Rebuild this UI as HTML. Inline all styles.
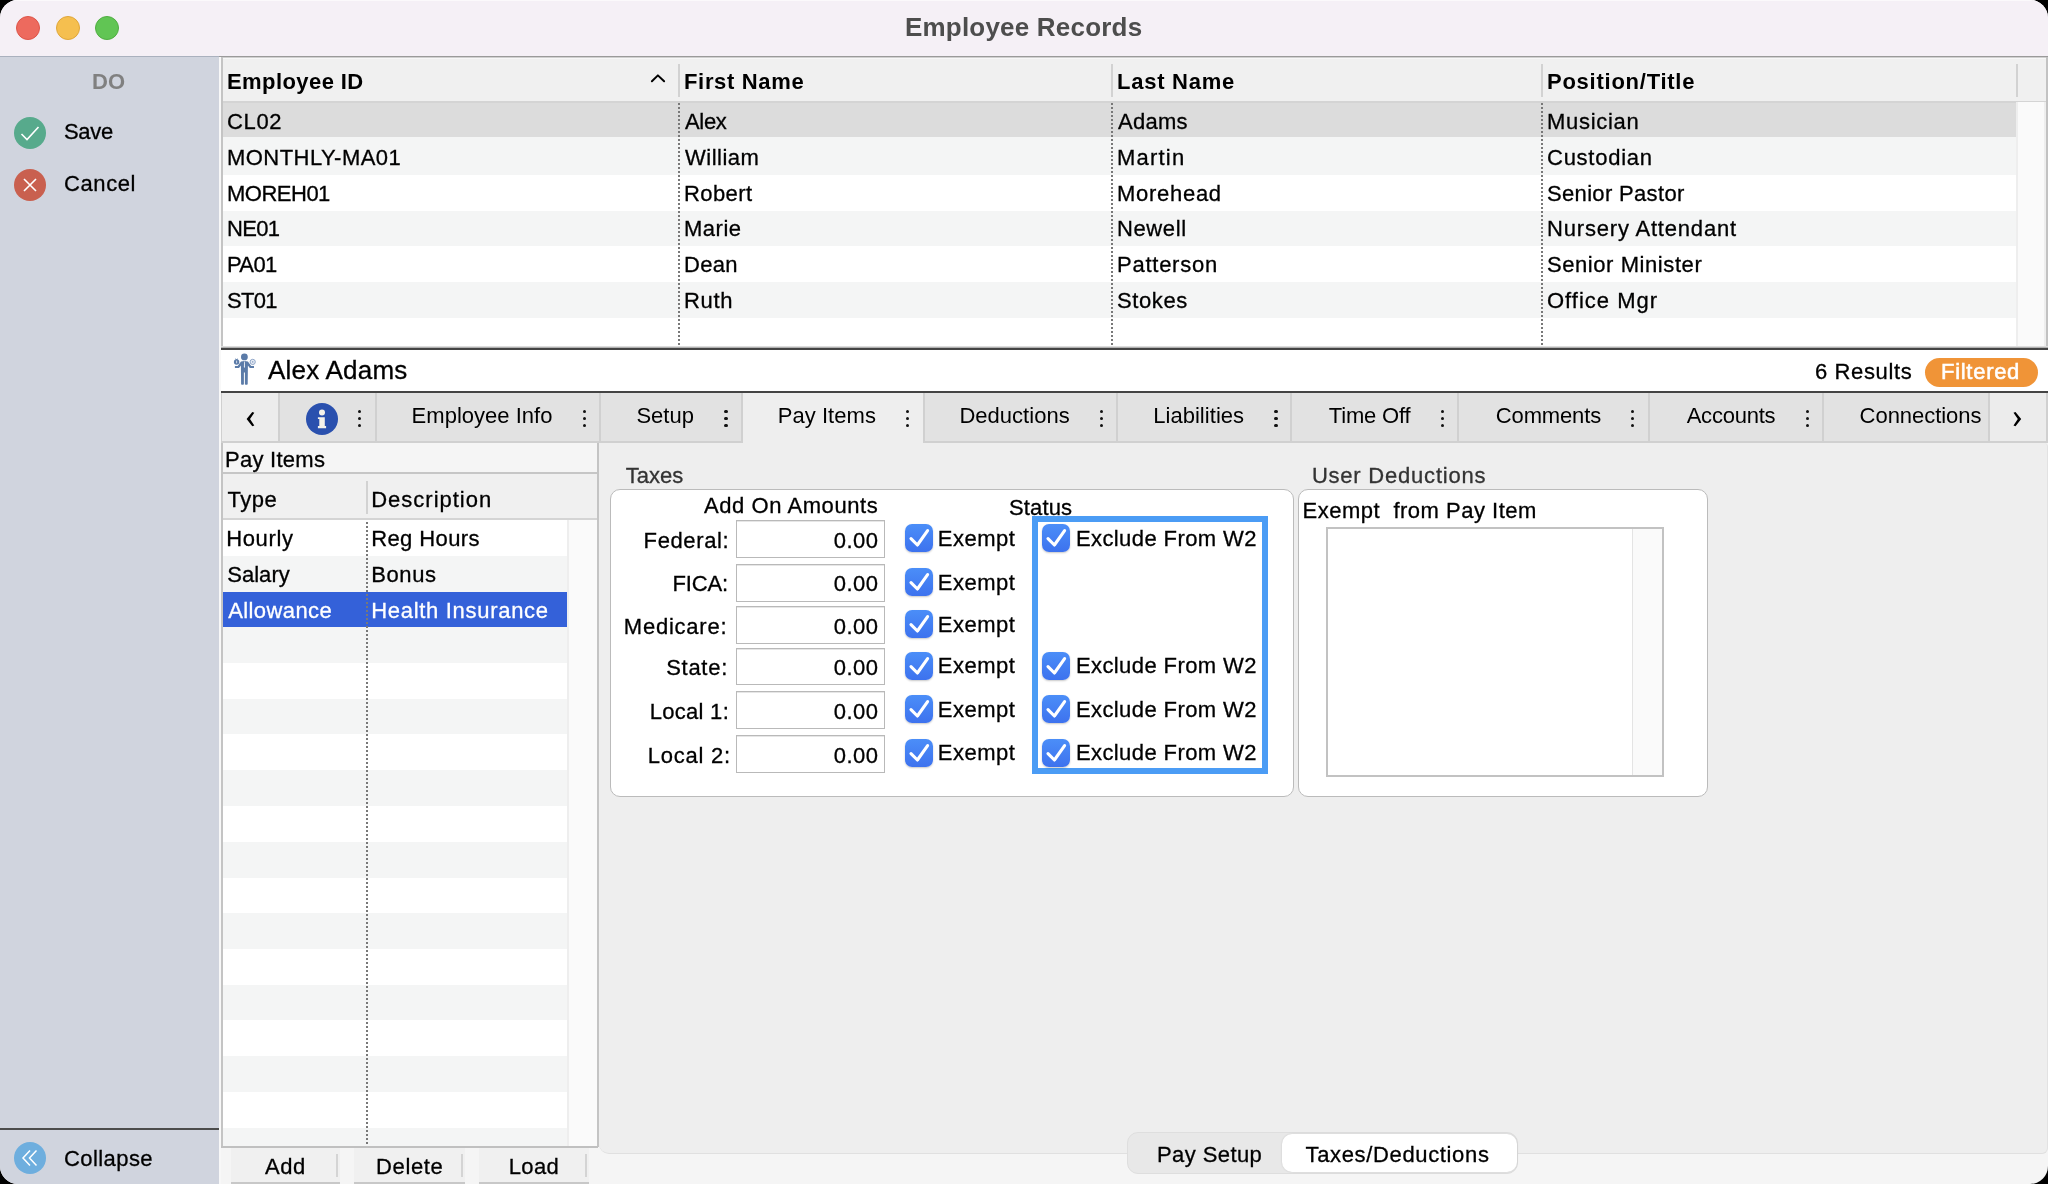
<!DOCTYPE html>
<html>
<head>
<meta charset="utf-8">
<title>Employee Records</title>
<style>
*{box-sizing:border-box;margin:0;padding:0}
html,body{width:2048px;height:1184px;overflow:hidden;background:#000}
body{font-family:"Liberation Sans",sans-serif;font-size:22px;color:#000;position:relative}
.a{position:absolute}
.t{position:absolute;white-space:nowrap;line-height:1;-webkit-text-stroke:0.3px currentColor}
.b{font-weight:bold;-webkit-text-stroke:0}
#win{position:absolute;left:0;top:0;width:2048px;height:1184px;border-radius:18px;overflow:hidden;background:#f5f5f5;will-change:transform}
.tl{position:absolute;top:16px;width:24px;height:24px;border-radius:50%}
.vd{position:absolute;width:2px;background-image:linear-gradient(#787878 50%,rgba(0,0,0,0) 50%);background-size:2px 4px}
.dots{position:absolute;width:4px;height:20px}
.dots i{position:absolute;left:0;width:3.4px;height:3.4px;border-radius:50%;background:#111}
.cb{position:absolute;width:28px;height:28px;border-radius:7px;background:linear-gradient(#4b8ef8,#3d72ee);box-shadow:0 1px 2px rgba(0,0,0,.22)}
.cb svg{position:absolute;left:0;top:0}
.inp{position:absolute;width:149px;background:#fff;border:1px solid #b9b9b9;box-shadow:inset 0 1px 0 #e6e6e6}
</style>
</head>
<body>
<div id="win">
<div class="a" style="left:0px;top:0px;width:2048px;height:56px;background:#f5f0f6"></div>
<div class="a" style="left:0px;top:0px;width:2048px;height:1px;background:#fbf9fb"></div>
<div class="a" style="left:0px;top:56px;width:219px;height:1px;background:#aab1be"></div>
<div class="a" style="left:219px;top:56px;width:1829px;height:1px;background:#9a9a9a"></div>
<div class="tl" style="left:16px;background:#ed6a5e;border:1px solid #dd5549"></div>
<div class="tl" style="left:56px;background:#f5bf4f;border:1px solid #dfa63a"></div>
<div class="tl" style="left:95px;background:#61c554;border:1px solid #50ad42"></div>
<div id="t0" class="t b" style="left:905.00px;top:14px;font-size:26px;letter-spacing:0.200px;color:#4d4d4d">Employee Records</div>
<div class="a" style="left:0px;top:57px;width:219px;height:1127px;background:#d0d4de"></div>
<div class="a" style="left:219px;top:57px;width:2px;height:1127px;background:#f8f8f8"></div>
<div id="t1" class="t b" style="left:92.00px;top:71px;font-size:22px;color:#808080">DO</div>
<div class="a" style="left:14px;top:117px;width:32px;height:32px;border-radius:50%;background:#57aa8c"><svg width="32" height="32" viewBox="0 0 32 32"><path d="M7.5 17 L13 22.5 L24.5 10" fill="none" stroke="#fff" stroke-width="1.6"/></svg></div>
<div id="t2" class="t " style="left:64.00px;top:121px;font-size:22px;letter-spacing:-0.333px;">Save</div>
<div class="a" style="left:14px;top:169px;width:32px;height:32px;border-radius:50%;background:#c9604f"><svg width="32" height="32" viewBox="0 0 32 32"><path d="M10 10 L22 22 M22 10 L10 22" fill="none" stroke="#fff" stroke-width="1.6"/></svg></div>
<div id="t3" class="t " style="left:64.00px;top:173px;font-size:22px;letter-spacing:0.600px;">Cancel</div>
<div class="a" style="left:0px;top:1128px;width:219px;height:2px;background:#4c4c4c"></div>
<div class="a" style="left:14px;top:1142px;width:32px;height:32px;border-radius:50%;background:#6eaede"><svg width="32" height="32" viewBox="0 0 32 32"><path d="M16 8.5 L9 16 L16 23.5 M22.5 8.5 L15.5 16 L22.5 23.5" fill="none" stroke="#fff" stroke-width="1.5"/></svg></div>
<div id="t4" class="t " style="left:64.00px;top:1148px;font-size:22px;letter-spacing:0.429px;">Collapse</div>
<div class="a" style="left:223px;top:57px;width:1825px;height:291px;background:#fff"></div>
<div class="a" style="left:221px;top:57px;width:2px;height:291px;background:#c4c4c4"></div>
<div class="a" style="left:223px;top:57px;width:1825px;height:44px;background:#f0f0f0"></div>
<div class="a" style="left:223px;top:57px;width:1823px;height:1px;background:#d0d0d0"></div>
<div class="a" style="left:223px;top:58px;width:1823px;height:1px;background:#f7f7f7"></div>
<div class="a" style="left:223px;top:101px;width:1825px;height:2px;background:#d4d4d4"></div>
<div class="a" style="left:223px;top:103px;width:1794px;height:34px;background:#dcdcdc"></div>
<div id="t5" class="t " style="left:227.00px;top:111px;font-size:22px;letter-spacing:0.667px;">CL02</div>
<div id="t6" class="t " style="left:685.00px;top:111px;font-size:22px;letter-spacing:-0.333px;">Alex</div>
<div id="t7" class="t " style="left:1118.00px;top:111px;font-size:22px;letter-spacing:0.250px;">Adams</div>
<div id="t8" class="t " style="left:1547.00px;top:111px;font-size:22px;letter-spacing:0.714px;">Musician</div>
<div class="a" style="left:223px;top:137px;width:1794px;height:38px;background:#f4f5f5"></div>
<div id="t9" class="t " style="left:227.00px;top:147px;font-size:22px;letter-spacing:0.455px;">MONTHLY-MA01</div>
<div id="t10" class="t " style="left:685.00px;top:147px;font-size:22px;letter-spacing:0.500px;">William</div>
<div id="t11" class="t " style="left:1117.00px;top:147px;font-size:22px;letter-spacing:1.200px;">Martin</div>
<div id="t12" class="t " style="left:1547.00px;top:147px;font-size:22px;letter-spacing:0.750px;">Custodian</div>
<div class="a" style="left:223px;top:175px;width:1794px;height:36px;background:#fff"></div>
<div id="t13" class="t " style="left:227.00px;top:183px;font-size:22px;letter-spacing:-0.500px;">MOREH01</div>
<div id="t14" class="t " style="left:684.00px;top:183px;font-size:22px;letter-spacing:0.400px;">Robert</div>
<div id="t15" class="t " style="left:1117.00px;top:183px;font-size:22px;letter-spacing:0.714px;">Morehead</div>
<div id="t16" class="t " style="left:1547.00px;top:183px;font-size:22px;letter-spacing:0.334px;">Senior Pastor</div>
<div class="a" style="left:223px;top:211px;width:1794px;height:35px;background:#f4f5f5"></div>
<div id="t17" class="t " style="left:227.00px;top:218px;font-size:22px;letter-spacing:-0.667px;">NE01</div>
<div id="t18" class="t " style="left:684.00px;top:218px;font-size:22px;letter-spacing:0.500px;">Marie</div>
<div id="t19" class="t " style="left:1117.00px;top:218px;font-size:22px;letter-spacing:0.600px;">Newell</div>
<div id="t20" class="t " style="left:1547.00px;top:218px;font-size:22px;letter-spacing:0.812px;">Nursery Attendant</div>
<div class="a" style="left:223px;top:246px;width:1794px;height:36px;background:#fff"></div>
<div id="t21" class="t " style="left:227.00px;top:254px;font-size:22px;letter-spacing:-0.667px;">PA01</div>
<div id="t22" class="t " style="left:684.00px;top:254px;font-size:22px;letter-spacing:0.333px;">Dean</div>
<div id="t23" class="t " style="left:1117.00px;top:254px;font-size:22px;letter-spacing:0.750px;">Patterson</div>
<div id="t24" class="t " style="left:1547.00px;top:254px;font-size:22px;letter-spacing:0.571px;">Senior Minister</div>
<div class="a" style="left:223px;top:282px;width:1794px;height:36px;background:#f4f5f5"></div>
<div id="t25" class="t " style="left:227.00px;top:290px;font-size:22px;letter-spacing:-0.667px;">ST01</div>
<div id="t26" class="t " style="left:684.00px;top:290px;font-size:22px;letter-spacing:0.667px;">Ruth</div>
<div id="t27" class="t " style="left:1117.00px;top:290px;font-size:22px;letter-spacing:0.600px;">Stokes</div>
<div id="t28" class="t " style="left:1547.00px;top:290px;font-size:22px;letter-spacing:1.000px;">Office Mgr</div>
<div class="a" style="left:2016px;top:102px;width:30px;height:244px;background:#fafafa;border-left:2px solid #eeeeee;border-right:2px solid #eeeeee"></div>
<div class="a" style="left:2046px;top:57px;width:2px;height:289px;background:#c2c2c2"></div>
<div id="t29" class="t b" style="left:227.00px;top:71px;font-size:22px;letter-spacing:0.420px;">Employee ID</div>
<div id="t30" class="t b" style="left:684.00px;top:71px;font-size:22px;letter-spacing:0.667px;">First Name</div>
<div id="t31" class="t b" style="left:1117.00px;top:71px;font-size:22px;letter-spacing:0.750px;">Last Name</div>
<div id="t32" class="t b" style="left:1547.00px;top:71px;font-size:22px;letter-spacing:0.749px;">Position/Title</div>
<div class="a" style="left:678px;top:64px;width:2px;height:33px;background:#d2d2d2"></div>
<div class="a" style="left:1111px;top:64px;width:2px;height:33px;background:#d2d2d2"></div>
<div class="a" style="left:1541px;top:64px;width:2px;height:33px;background:#d2d2d2"></div>
<div class="a" style="left:2016px;top:64px;width:2px;height:33px;background:#d2d2d2"></div>
<div class="vd" style="left:678px;top:103px;height:243px"></div>
<div class="vd" style="left:1111px;top:103px;height:243px"></div>
<div class="vd" style="left:1541px;top:103px;height:243px"></div>
<svg class="a" style="left:648px;top:70px" width="20" height="16" viewBox="0 0 20 16"><path d="M3.9 11.3 L9.9 5.4 L16.1 11.3" fill="none" stroke="#000" stroke-width="2" stroke-linecap="round" stroke-linejoin="round"/></svg>
<div class="a" style="left:221px;top:346px;width:1827px;height:1px;background:#dcdcdc"></div>
<div class="a" style="left:221px;top:347px;width:1827px;height:1px;background:#b2b2b2"></div>
<div class="a" style="left:221px;top:348px;width:1827px;height:2px;background:#444"></div>
<div class="a" style="left:221px;top:350px;width:1827px;height:41px;background:#fff"></div>
<div class="a" style="left:221px;top:391px;width:1827px;height:2px;background:#444"></div>
<div id="t33" class="t " style="left:268.00px;top:357px;font-size:26px;letter-spacing:0.222px;">Alex Adams</div>
<svg class="a" style="left:226px;top:350px" width="40" height="40" viewBox="0 0 40 40"><g fill="#5b7ba8"><circle cx="18.4" cy="6.9" r="3.4"/><path d="M15 11.4 Q18.4 10.6 21.9 11.4 L25.2 15.9 L28 16.1 L28 18 L23.8 18 L21.9 15.6 L21.7 34.2 Q20.3 35.3 18.9 34.2 L18.9 22.6 L17.9 22.6 L17.9 34.2 Q16.5 35.3 15.1 34.2 L14.9 15.6 L13 18 L8.9 18 L8.9 16.1 L11.7 15.9 Z"/><circle cx="10.6" cy="12" r="2.7"/><path d="M9.2 8 L10.6 9.6 L12 8 L11.4 10 L9.8 10 Z"/></g><ellipse cx="10.6" cy="12" rx="0.6" ry="1.4" fill="#c9d4e6"/><path d="M18.05 11.6 L18.85 11.6 L19 17 L18.45 18 L17.9 17 Z" fill="#e9eef5"/><circle cx="26.7" cy="11.9" r="2.6" fill="#e8edf5" stroke="#8fa6c8" stroke-width="1"/><circle cx="26.7" cy="11.9" r="0.8" fill="#8fa6c8"/></svg>
<div id="t34" class="t " style="left:1815.00px;top:361px;font-size:22px;letter-spacing:0.625px;">6 Results</div>
<div class="a" style="left:1925px;top:358px;width:113px;height:29px;background:#f09437;border-radius:14.5px"></div>
<div id="t35" class="t " style="left:1941.00px;top:361px;font-size:22px;letter-spacing:0.714px;color:#fff;-webkit-text-stroke:0.55px #fff">Filtered</div>
<div class="a" style="left:221px;top:393px;width:1827px;height:48px;background:#e2e2e2"></div>
<div class="a" style="left:221px;top:393px;width:58px;height:48px;background:#ececec"></div>
<div class="a" style="left:1989px;top:393px;width:57px;height:48px;background:#ececec"></div>
<div class="a" style="left:2046px;top:393px;width:2px;height:48px;background:#d0d0d0"></div>
<div class="a" style="left:221px;top:441px;width:1827px;height:2px;background:#d0d0d0"></div>
<div class="a" style="left:221px;top:393px;width:1px;height:50px;background:#d0d0d0"></div>
<div class="a" style="left:743px;top:393px;width:180px;height:50px;background:#eeeeee"></div>
<div class="a" style="left:278px;top:393px;width:2px;height:48px;background:#d0d0d0"></div>
<div class="a" style="left:375px;top:393px;width:2px;height:48px;background:#d0d0d0"></div>
<div class="a" style="left:599px;top:393px;width:2px;height:48px;background:#d0d0d0"></div>
<div class="a" style="left:741px;top:393px;width:2px;height:48px;background:#d0d0d0"></div>
<div class="a" style="left:923px;top:393px;width:2px;height:48px;background:#d0d0d0"></div>
<div class="a" style="left:1116px;top:393px;width:2px;height:48px;background:#d0d0d0"></div>
<div class="a" style="left:1290px;top:393px;width:2px;height:48px;background:#d0d0d0"></div>
<div class="a" style="left:1457px;top:393px;width:2px;height:48px;background:#d0d0d0"></div>
<div class="a" style="left:1648px;top:393px;width:2px;height:48px;background:#d0d0d0"></div>
<div class="a" style="left:1822px;top:393px;width:2px;height:48px;background:#d0d0d0"></div>
<div class="a" style="left:1988px;top:393px;width:2px;height:48px;background:#d0d0d0"></div>
<div id="t36" class="t " style="left:411.60px;top:405px;font-size:22px;letter-spacing:0.020px;-webkit-text-stroke:0">Employee Info</div>
<div id="t37" class="t " style="left:636.40px;top:405px;font-size:22px;-webkit-text-stroke:0">Setup</div>
<div id="t38" class="t " style="left:777.80px;top:405px;font-size:22px;letter-spacing:0.036px;-webkit-text-stroke:0">Pay Items</div>
<div id="t39" class="t " style="left:959.40px;top:405px;font-size:22px;letter-spacing:0.025px;-webkit-text-stroke:0">Deductions</div>
<div id="t40" class="t " style="left:1153.20px;top:405px;font-size:22px;letter-spacing:0.040px;-webkit-text-stroke:0">Liabilities</div>
<div id="t41" class="t " style="left:1328.80px;top:405px;font-size:22px;letter-spacing:-0.179px;-webkit-text-stroke:0">Time Off</div>
<div id="t42" class="t " style="left:1495.80px;top:405px;font-size:22px;letter-spacing:-0.141px;-webkit-text-stroke:0">Comments</div>
<div id="t43" class="t " style="left:1686.70px;top:405px;font-size:22px;letter-spacing:-0.239px;-webkit-text-stroke:0">Accounts</div>
<div id="t44" class="t " style="left:1859.60px;top:405px;font-size:22px;letter-spacing:-0.040px;-webkit-text-stroke:0">Connections</div>
<div class="dots" style="left:357.8px;top:409.6px"><i style="top:0"></i><i style="top:7.2px"></i><i style="top:14.4px"></i></div>
<div class="dots" style="left:582.6px;top:409.6px"><i style="top:0"></i><i style="top:7.2px"></i><i style="top:14.4px"></i></div>
<div class="dots" style="left:724.3px;top:409.6px"><i style="top:0"></i><i style="top:7.2px"></i><i style="top:14.4px"></i></div>
<div class="dots" style="left:905.5px;top:409.6px"><i style="top:0"></i><i style="top:7.2px"></i><i style="top:14.4px"></i></div>
<div class="dots" style="left:1099.8px;top:409.6px"><i style="top:0"></i><i style="top:7.2px"></i><i style="top:14.4px"></i></div>
<div class="dots" style="left:1274.3px;top:409.6px"><i style="top:0"></i><i style="top:7.2px"></i><i style="top:14.4px"></i></div>
<div class="dots" style="left:1441.0px;top:409.6px"><i style="top:0"></i><i style="top:7.2px"></i><i style="top:14.4px"></i></div>
<div class="dots" style="left:1630.7px;top:409.6px"><i style="top:0"></i><i style="top:7.2px"></i><i style="top:14.4px"></i></div>
<div class="dots" style="left:1805.7px;top:409.6px"><i style="top:0"></i><i style="top:7.2px"></i><i style="top:14.4px"></i></div>
<svg class="a" style="left:240px;top:405px" width="20" height="28" viewBox="0 0 20 28"><path d="M14.3 7.8 L12.3 7 L6.6 14.1 L12.3 21.3 L14.3 20.5 L10 14.1 Z" fill="#000"/></svg>
<svg class="a" style="left:2007px;top:405px" width="20" height="28" viewBox="0 0 20 28"><path d="M6.5 7.8 L8.5 7 L14.2 14.1 L8.5 21.3 L6.5 20.5 L10.8 14.1 Z" fill="#000"/></svg>
<div class="a" style="left:306px;top:403px;width:32px;height:32px;border-radius:50%;background:#2a50ae"><svg width="32" height="32" viewBox="0 0 32 32"><circle cx="16" cy="9.4" r="3" fill="#f4f1ea"/><path d="M11.9 14.2 H18.8 V23 H20.1 V25.2 H11.9 V23 H13.3 V15.9 H11.9 Z" fill="#f4f1ea"/></svg></div>
<div class="a" style="left:222px;top:443px;width:376px;height:704px;background:#fff"></div>
<div class="a" style="left:222px;top:443px;width:376px;height:30px;background:#f5f5f5"></div>
<div class="a" style="left:222px;top:472px;width:376px;height:2px;background:#c6c6c6"></div>
<div id="t45" class="t " style="left:225.00px;top:449px;font-size:22px;letter-spacing:0.264px;">Pay Items</div>
<div class="a" style="left:222px;top:474px;width:376px;height:45px;background:#f0f0f0"></div>
<div class="a" style="left:222px;top:518px;width:376px;height:2px;background:#d4d4d4"></div>
<div class="a" style="left:366px;top:481px;width:2px;height:33px;background:#d2d2d2"></div>
<div id="t46" class="t " style="left:227.50px;top:489px;font-size:22px;letter-spacing:0.530px;">Type</div>
<div id="t47" class="t " style="left:371.20px;top:489px;font-size:22px;letter-spacing:1.000px;">Description</div>
<div class="a" style="left:223px;top:520px;width:344px;height:36px;background:#fff"></div>
<div id="t48" class="t " style="left:226.20px;top:528px;font-size:22px;letter-spacing:0.640px;">Hourly</div>
<div id="t49" class="t " style="left:371.20px;top:528px;font-size:22px;letter-spacing:0.400px;">Reg Hours</div>
<div class="a" style="left:223px;top:556px;width:344px;height:36px;background:#f4f5f5"></div>
<div id="t50" class="t " style="left:227.20px;top:564px;font-size:22px;letter-spacing:0.040px;">Salary</div>
<div id="t51" class="t " style="left:371.20px;top:564px;font-size:22px;letter-spacing:0.600px;">Bonus</div>
<div class="a" style="left:223px;top:592px;width:344px;height:35px;background:#3461d9"></div>
<div id="t52" class="t " style="left:228.20px;top:600px;font-size:22px;letter-spacing:0.400px;color:#fff">Allowance</div>
<div id="t53" class="t " style="left:371.20px;top:600px;font-size:22px;letter-spacing:0.701px;color:#fff">Health Insurance</div>
<div class="a" style="left:223px;top:627px;width:344px;height:36px;background:#f4f5f5"></div>
<div class="a" style="left:223px;top:663px;width:344px;height:36px;background:#fff"></div>
<div class="a" style="left:223px;top:699px;width:344px;height:35px;background:#f4f5f5"></div>
<div class="a" style="left:223px;top:734px;width:344px;height:36px;background:#fff"></div>
<div class="a" style="left:223px;top:770px;width:344px;height:36px;background:#f4f5f5"></div>
<div class="a" style="left:223px;top:806px;width:344px;height:36px;background:#fff"></div>
<div class="a" style="left:223px;top:842px;width:344px;height:36px;background:#f4f5f5"></div>
<div class="a" style="left:223px;top:878px;width:344px;height:35px;background:#fff"></div>
<div class="a" style="left:223px;top:913px;width:344px;height:36px;background:#f4f5f5"></div>
<div class="a" style="left:223px;top:949px;width:344px;height:36px;background:#fff"></div>
<div class="a" style="left:223px;top:985px;width:344px;height:35px;background:#f4f5f5"></div>
<div class="a" style="left:223px;top:1020px;width:344px;height:36px;background:#fff"></div>
<div class="a" style="left:223px;top:1056px;width:344px;height:36px;background:#f4f5f5"></div>
<div class="a" style="left:223px;top:1092px;width:344px;height:36px;background:#fff"></div>
<div class="a" style="left:223px;top:1128px;width:344px;height:18px;background:#f4f5f5"></div>
<div class="vd" style="left:366px;top:522px;height:624px"></div>
<div class="a" style="left:567px;top:520px;width:30px;height:626px;background:#fafafa;border-left:2px solid #eeeeee"></div>
<div class="a" style="left:597px;top:443px;width:2px;height:704px;background:#c4c4c4"></div>
<div class="a" style="left:221px;top:443px;width:2px;height:704px;background:#c4c4c4"></div>
<div class="a" style="left:221px;top:1146px;width:377px;height:2px;background:#c0c0c0"></div>
<div class="a" style="left:231px;top:1148px;width:109px;height:36px;background:#f0f0f0;border-bottom:2px solid #c8c8c8"></div>
<div class="a" style="left:336px;top:1154px;width:2px;height:23px;background:#d4d4d4"></div>
<div id="t54" class="t " style="left:265.00px;top:1156px;font-size:22px;letter-spacing:0.500px;">Add</div>
<div class="a" style="left:354px;top:1148px;width:111px;height:36px;background:#f0f0f0;border-bottom:2px solid #c8c8c8"></div>
<div class="a" style="left:461px;top:1154px;width:2px;height:23px;background:#d4d4d4"></div>
<div id="t55" class="t " style="left:376.00px;top:1156px;font-size:22px;letter-spacing:0.640px;">Delete</div>
<div class="a" style="left:479px;top:1148px;width:109.5px;height:36px;background:#f0f0f0;border-bottom:2px solid #c8c8c8"></div>
<div class="a" style="left:584.5px;top:1154px;width:2px;height:23px;background:#d4d4d4"></div>
<div id="t56" class="t " style="left:508.80px;top:1156px;font-size:22px;letter-spacing:0.333px;">Load</div>
<div class="a" style="left:599px;top:443px;width:1449px;height:711px;background:#eeeeee;border-radius:0 4px 6px 10px;border-bottom:1px solid #e0e0e0;border-right:1px solid #e2e2e2"></div>
<div id="t57" class="t " style="left:625.70px;top:465px;font-size:22px;color:#333">Taxes</div>
<div id="t58" class="t " style="left:1311.90px;top:465px;font-size:22px;letter-spacing:0.784px;color:#333">User Deductions</div>
<div class="a" style="left:610px;top:489px;width:684px;height:308px;background:#fff;border:1px solid #bbb;border-radius:10px"></div>
<div class="a" style="left:1298px;top:489px;width:410px;height:308px;background:#fff;border:1px solid #bbb;border-radius:10px"></div>
<div id="t59" class="t " style="left:703.90px;top:495px;font-size:22px;letter-spacing:0.579px;">Add On Amounts</div>
<div id="t60" class="t " style="left:1008.90px;top:497px;font-size:22px;letter-spacing:0.160px;">Status</div>
<div class="inp" style="left:736px;top:520px;height:38px"></div>
<div id="t61" class="t " style="left:643.60px;top:530px;font-size:22px;letter-spacing:0.619px;">Federal:</div>
<div id="t62" class="t " style="left:833.80px;top:530px;font-size:22px;letter-spacing:0.463px;">0.00</div>
<div class="inp" style="left:736px;top:564px;height:38px"></div>
<div id="t63" class="t " style="left:672.40px;top:573px;font-size:22px;letter-spacing:-0.150px;">FICA:</div>
<div id="t64" class="t " style="left:833.80px;top:573px;font-size:22px;letter-spacing:0.463px;">0.00</div>
<div class="inp" style="left:736px;top:606px;height:38px"></div>
<div id="t65" class="t " style="left:623.80px;top:616px;font-size:22px;letter-spacing:0.775px;">Medicare:</div>
<div id="t66" class="t " style="left:833.80px;top:616px;font-size:22px;letter-spacing:0.463px;">0.00</div>
<div class="inp" style="left:736px;top:648px;height:37px"></div>
<div id="t67" class="t " style="left:666.20px;top:657px;font-size:22px;letter-spacing:0.720px;">State:</div>
<div id="t68" class="t " style="left:833.80px;top:657px;font-size:22px;letter-spacing:0.463px;">0.00</div>
<div class="inp" style="left:736px;top:691px;height:38px"></div>
<div id="t69" class="t " style="left:649.70px;top:701px;font-size:22px;letter-spacing:0.286px;">Local 1:</div>
<div id="t70" class="t " style="left:833.80px;top:701px;font-size:22px;letter-spacing:0.463px;">0.00</div>
<div class="inp" style="left:736px;top:735px;height:38px"></div>
<div id="t71" class="t " style="left:647.70px;top:745px;font-size:22px;letter-spacing:0.751px;">Local 2:</div>
<div id="t72" class="t " style="left:833.80px;top:745px;font-size:22px;letter-spacing:0.463px;">0.00</div>
<div class="cb" style="left:905px;top:524px"><svg width="28" height="28" viewBox="0 0 28 28"><path d="M6 14.6 L12.4 21 L22.6 6.6" fill="none" stroke="#fff" stroke-width="3.1" stroke-linecap="round" stroke-linejoin="round"/></svg></div>
<div id="t73" class="t " style="left:937.80px;top:528px;font-size:22px;letter-spacing:0.480px;">Exempt</div>
<div class="cb" style="left:905px;top:568px"><svg width="28" height="28" viewBox="0 0 28 28"><path d="M6 14.6 L12.4 21 L22.6 6.6" fill="none" stroke="#fff" stroke-width="3.1" stroke-linecap="round" stroke-linejoin="round"/></svg></div>
<div id="t74" class="t " style="left:937.80px;top:572px;font-size:22px;letter-spacing:0.480px;">Exempt</div>
<div class="cb" style="left:905px;top:610px"><svg width="28" height="28" viewBox="0 0 28 28"><path d="M6 14.6 L12.4 21 L22.6 6.6" fill="none" stroke="#fff" stroke-width="3.1" stroke-linecap="round" stroke-linejoin="round"/></svg></div>
<div id="t75" class="t " style="left:937.80px;top:614px;font-size:22px;letter-spacing:0.480px;">Exempt</div>
<div class="cb" style="left:905px;top:652px"><svg width="28" height="28" viewBox="0 0 28 28"><path d="M6 14.6 L12.4 21 L22.6 6.6" fill="none" stroke="#fff" stroke-width="3.1" stroke-linecap="round" stroke-linejoin="round"/></svg></div>
<div id="t76" class="t " style="left:937.80px;top:655px;font-size:22px;letter-spacing:0.480px;">Exempt</div>
<div class="cb" style="left:905px;top:695px"><svg width="28" height="28" viewBox="0 0 28 28"><path d="M6 14.6 L12.4 21 L22.6 6.6" fill="none" stroke="#fff" stroke-width="3.1" stroke-linecap="round" stroke-linejoin="round"/></svg></div>
<div id="t77" class="t " style="left:937.80px;top:699px;font-size:22px;letter-spacing:0.480px;">Exempt</div>
<div class="cb" style="left:905px;top:739px"><svg width="28" height="28" viewBox="0 0 28 28"><path d="M6 14.6 L12.4 21 L22.6 6.6" fill="none" stroke="#fff" stroke-width="3.1" stroke-linecap="round" stroke-linejoin="round"/></svg></div>
<div id="t78" class="t " style="left:937.80px;top:742px;font-size:22px;letter-spacing:0.480px;">Exempt</div>
<div class="a" style="left:1032px;top:516px;width:236px;height:258px;border:6px solid #4b9cf5"></div>
<div class="cb" style="left:1042px;top:524px"><svg width="28" height="28" viewBox="0 0 28 28"><path d="M6 14.6 L12.4 21 L22.6 6.6" fill="none" stroke="#fff" stroke-width="3.1" stroke-linecap="round" stroke-linejoin="round"/></svg></div>
<div id="t79" class="t " style="left:1075.90px;top:528px;font-size:22px;letter-spacing:0.414px;">Exclude From W2</div>
<div class="cb" style="left:1042px;top:652px"><svg width="28" height="28" viewBox="0 0 28 28"><path d="M6 14.6 L12.4 21 L22.6 6.6" fill="none" stroke="#fff" stroke-width="3.1" stroke-linecap="round" stroke-linejoin="round"/></svg></div>
<div id="t80" class="t " style="left:1075.90px;top:655px;font-size:22px;letter-spacing:0.414px;">Exclude From W2</div>
<div class="cb" style="left:1042px;top:695px"><svg width="28" height="28" viewBox="0 0 28 28"><path d="M6 14.6 L12.4 21 L22.6 6.6" fill="none" stroke="#fff" stroke-width="3.1" stroke-linecap="round" stroke-linejoin="round"/></svg></div>
<div id="t81" class="t " style="left:1075.90px;top:699px;font-size:22px;letter-spacing:0.414px;">Exclude From W2</div>
<div class="cb" style="left:1042px;top:739px"><svg width="28" height="28" viewBox="0 0 28 28"><path d="M6 14.6 L12.4 21 L22.6 6.6" fill="none" stroke="#fff" stroke-width="3.1" stroke-linecap="round" stroke-linejoin="round"/></svg></div>
<div id="t82" class="t " style="left:1075.90px;top:742px;font-size:22px;letter-spacing:0.414px;">Exclude From W2</div>
<div id="t83" class="t " style="left:1302.50px;top:500px;font-size:22px;letter-spacing:0.510px;">Exempt&nbsp; from Pay Item</div>
<div class="a" style="left:1326px;top:527px;width:338px;height:250px;background:#fff;border:2px solid #c2c2c2"></div>
<div class="a" style="left:1632px;top:529px;width:30px;height:246px;background:#fafafa;border-left:1px solid #e4e4e4"></div>
<div class="a" style="left:1127px;top:1132px;width:391px;height:42px;background:#e8e8e8;border:1px solid #dedede;border-radius:11px"></div>
<div class="a" style="left:1282px;top:1134px;width:235px;height:38px;background:#fff;border-radius:10px;box-shadow:0 0 2px rgba(0,0,0,.15)"></div>
<div id="t84" class="t " style="left:1157.00px;top:1144px;font-size:22px;letter-spacing:0.411px;">Pay Setup</div>
<div id="t85" class="t " style="left:1305.50px;top:1144px;font-size:22px;letter-spacing:0.649px;">Taxes/Deductions</div>
</div>
</body>
</html>
